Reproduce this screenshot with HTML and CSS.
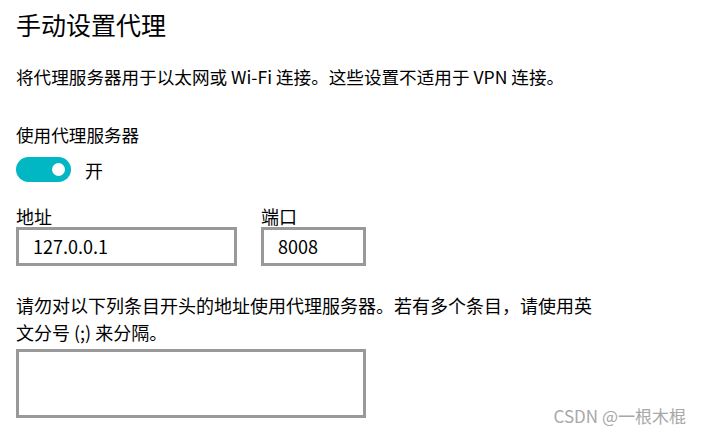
FILE: index.html
```html
<!DOCTYPE html>
<html lang="zh-CN">

<head>
    <meta charset="UTF-8" />
    <meta name="viewport" content="width=device-width, initial-scale=1.0" />
    <title>手动设置代理</title>
    <link rel="stylesheet" href="styles.css">
</head>

<body>
    <div class="page">
        <h1 class="title">手动设置代理</h1>
        <p class="desc">将代理服务器用于以太网或 Wi-Fi 连接。这些设置不适用于 VPN 连接。</p>

        <div class="label">使用代理服务器</div>
        <div class="toggle-row">
            <div class="toggle on">
                <span class="knob"></span>
            </div>
            <span class="toggle-text">开</span>
        </div>

        <div class="fields">
            <div class="field">
                <div class="field-label">地址</div>
                <div class="input address">127.0.0.1</div>
            </div>
            <div class="field">
                <div class="field-label">端口</div>
                <div class="input port">8008</div>
            </div>
        </div>

        <p class="hint">请勿对以下列条目开头的地址使用代理服务器。若有多个条目，请使用英文分号 (;) 来分隔。</p>
        <div class="textarea"></div>
    </div>

    <div class="watermark">CSDN @一根木棍</div>
</body>

</html>
```

FILE: styles.css
```css
* {
    box-sizing: border-box;
}

body {
    margin: 0;
    background: #fff;
    color: #000;
    font-family: "Noto Sans CJK SC", "Noto Sans", sans-serif;
}

.page {
    padding: 0 16px;
}

.title {
    font-size: 25px;
    font-weight: 400;
    line-height: 34px;
    margin: 7px 0 0;
}

.desc {
    font-size: 17.6px;
    line-height: 24px;
    margin: 24px 0 0;
}

.label {
    font-size: 17.6px;
    line-height: 24px;
    margin-top: 34px;
}

.toggle-row {
    display: flex;
    align-items: center;
    gap: 14px;
    margin-top: 10px;
}

.toggle {
    width: 55px;
    height: 25px;
    border-radius: 13px;
    background-color: #00b7c3;
    display: flex;
    align-items: center;
    justify-content: flex-end;
    padding-right: 6px;
}

.knob {
    width: 13px;
    height: 13px;
    border-radius: 50%;
    background: #fff;
}

.toggle-text {
    font-size: 18px;
    line-height: 24px;
}

.fields {
    display: flex;
    gap: 24px;
    margin-top: 24px;
}

.field-label {
    font-size: 18px;
    line-height: 20px;
    margin-bottom: 1px;
}

.input {
    height: 39px;
    border: 3px solid #999;
    padding: 0 14px;
    font-size: 18px;
    line-height: 33px;
}

.address {
    width: 221px;
}

.port {
    width: 105px;
}

.hint {
    max-width: 582px;
    font-size: 18px;
    line-height: 27px;
    margin: 26px 0 0;
}

.textarea {
    width: 350px;
    height: 69px;
    border: 3px solid #999;
    margin-top: 3px;
}

.watermark {
    position: absolute;
    right: 16px;
    bottom: 8px;
    font-size: 17px;
    line-height: 20px;
    color: #a8a8a8;
}
```
